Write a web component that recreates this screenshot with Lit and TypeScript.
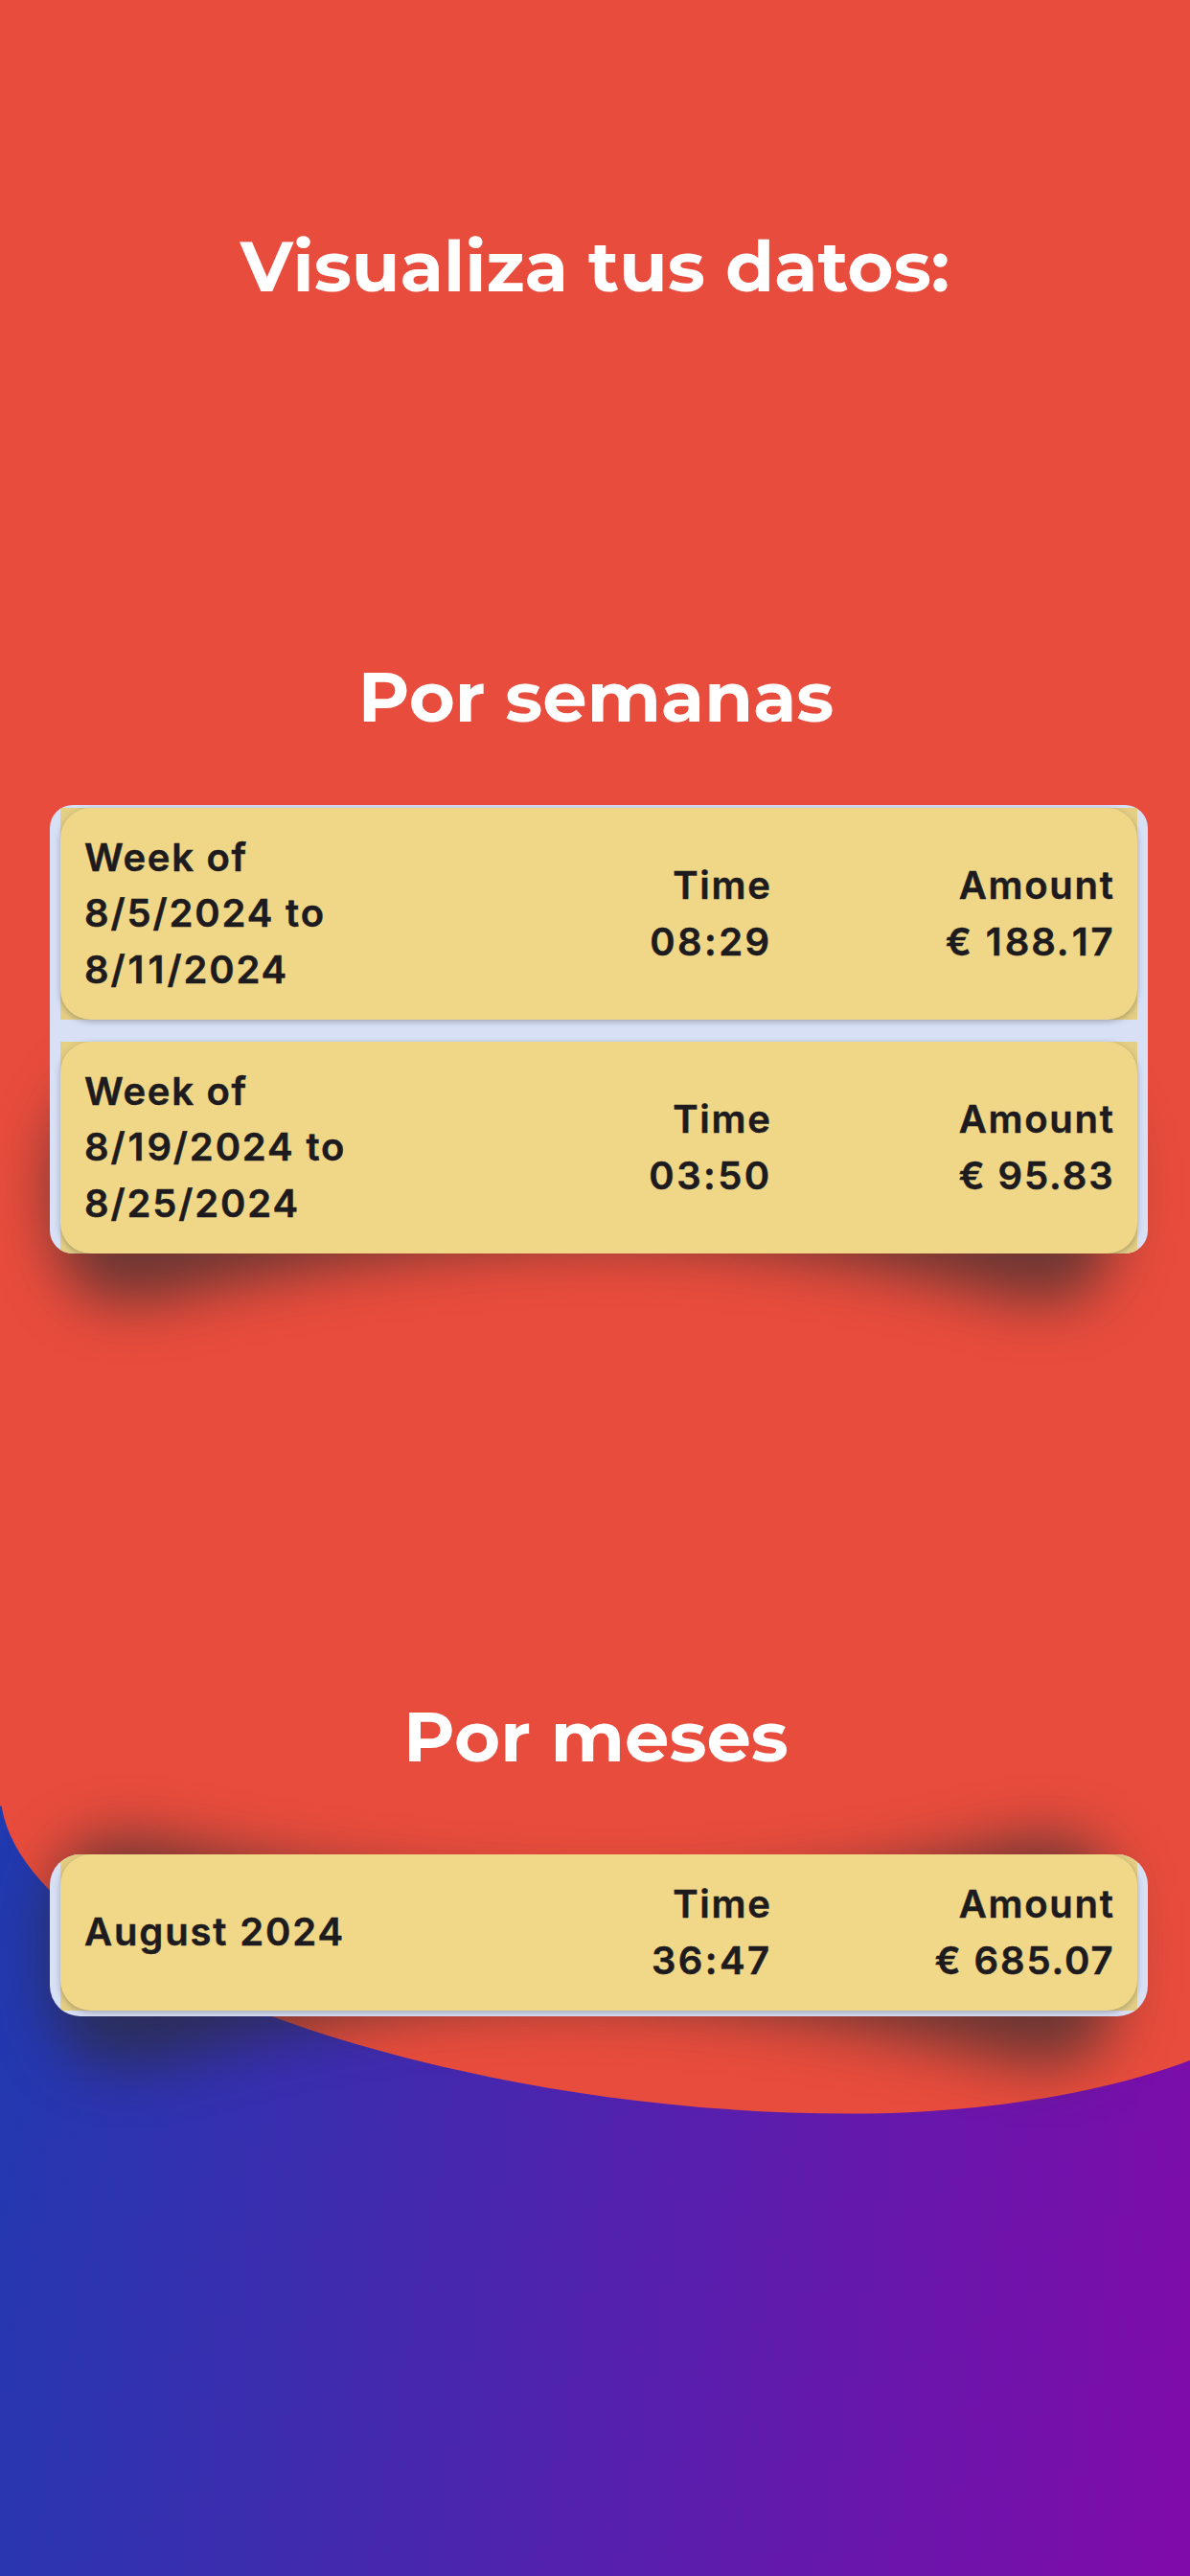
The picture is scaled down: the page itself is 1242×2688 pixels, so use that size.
import { LitElement, html, css } from "lit";
import { customElement, property } from "lit/decorators.js";

interface Entry {
  title: string[];
  time: string;
  amount: string;
}

const WEEKS: Entry[] = [
  { title: ["Week of", "8/5/2024 to", "8/11/2024"], time: "08:29", amount: "€ 188.17" },
  { title: ["Week of", "8/19/2024 to", "8/25/2024"], time: "03:50", amount: "€ 95.83" },
];
const MONTHS: Entry[] = [{ title: ["August 2024"], time: "36:47", amount: "€ 685.07" }];

const figures = (text: string) =>
  text.split(/(1)/).map((part) => (part === "1" ? html`<span class="one">1</span>` : part));

@customElement("entry-row")
class EntryRow extends LitElement {
  @property({ attribute: false }) entry!: Entry;

  static styles = css`
    :host {
      display: block;
      background: #e5cf84;
    }
    .row {
      box-sizing: border-box;
      height: 100%;
      display: grid;
      grid-template-columns: 1fr 340px 358px;
      align-items: center;
      padding: 0 23.5px 0 25px;
      border-radius: 32px;
      background: var(--row-color, #f0d788);
      box-shadow: 0 2px 6px rgba(60, 60, 60, 0.36);
      color: #1d1b1e;
      font: 600 40px/58.5px Inter, "Liberation Sans", sans-serif;
      -webkit-text-stroke: 0.5px currentColor;
      letter-spacing: 1.7px;
      white-space: nowrap;
    }
    .line {
      display: block;
    }
    .one {
      padding: 0 1.1px;
    }
    .value {
      text-align: right;
    }
    .date {
      letter-spacing: 1.85px;
    }
    .time {
      letter-spacing: 2.4px;
    }
    .amount {
      letter-spacing: 1.9px;
    }
  `;

  render() {
    const e = this.entry;
    return html`<div class="row">
      <div>
        ${e.title.map((t) => html`<span class=${/\d/.test(t) ? "line date" : "line"}>${figures(t)}</span>`)}
      </div>
      <div class="value"><span class="line">Time</span><span class="line time">${figures(e.time)}</span></div>
      <div class="value"><span class="line">Amount</span><span class="line amount">${figures(e.amount)}</span></div>
    </div>`;
  }
}

@customElement("app-root")
class AppRoot extends LitElement {
  static styles = css`
    :host {
      display: block;
    }
    .page {
      position: relative;
      box-sizing: border-box;
      width: 1242px;
      height: 2688px;
      overflow: hidden;
      display: flex;
      flex-direction: column;
      align-items: center;
      padding-top: 228px;
      background: linear-gradient(100deg, #1f3ab0 19%, #820aaa 101%);
    }
    .backdrop {
      position: absolute;
      inset: 0;
      width: 1242px;
      height: 2688px;
    }
    h1,
    h2 {
      position: relative;
      margin: 0;
      height: 100px;
      color: #fff;
      font: 700 73.5px/100px Montserrat, Inter, sans-serif;
      white-space: nowrap;
    }
    h1 {
      font-size: 73.8px;
    }
    .weeks-title {
      margin-top: 349px;
      padding-left: 2px;
    }
    .months-title {
      margin-top: 454px;
      padding-left: 2px;
    }
    .card {
      position: relative;
      box-sizing: border-box;
      width: 1146px;
      margin-left: 8px;
      padding: 0 11px;
      display: flex;
      flex-direction: column;
      overflow: hidden;
      background: #d8e0f6;
    }
    .weeks {
      margin-top: 63px;
      height: 468px;
      padding-top: 3px;
      gap: 23px;
      border-radius: 24px;
    }
    .weeks entry-row {
      height: 221px;
    }
    .months {
      margin-top: 73px;
      height: 169px;
      border-radius: 32px;
      --row-color: #f1d788;
    }
    .months entry-row {
      height: 163px;
    }
  `;

  render() {
    return html`<main class="page">
      <svg class="backdrop" viewBox="0 0 1242 2688" aria-hidden="true">
        <defs>
          <filter id="soft" x="-20%" y="-60%" width="140%" height="220%" color-interpolation-filters="sRGB">
            <feGaussianBlur stdDeviation="30 29" />
          </filter>
        </defs>
        <path
          fill="#e84c3c"
          d="M0 0H1242V2150C1145 2186 1020 2205.6 887 2205.6C480 2205.6 30 2060 1.5 1884.6H0Z"
        />
        <g fill="#2b2b2d" fill-opacity="0.66">
          <path filter="url(#soft)" d="M150 1090Q54 1150 54 1230C56 1330 74 1376 180 1352Q400 1300 610 1296T1045 1352C1146 1376 1164 1330 1166 1230Q1166 1150 1080 1090Z" />
          <path filter="url(#soft)" d="M52 2020C56 1940 74 1902 180 1924Q400 1970 610 1974T1045 1924C1146 1902 1164 1940 1166 2020V2050C1164 2126 1146 2172 1045 2148Q820 2092 610 2088T180 2148C74 2172 56 2126 52 2050Z" />
        </g>
      </svg>
      <h1>Visualiza tus datos:</h1>
      <h2 class="weeks-title">Por semanas</h2>
      <section class="card weeks">${WEEKS.map((e) => html`<entry-row .entry=${e}></entry-row>`)}</section>
      <h2 class="months-title">Por meses</h2>
      <section class="card months">${MONTHS.map((e) => html`<entry-row .entry=${e}></entry-row>`)}</section>
    </main>`;
  }
}
